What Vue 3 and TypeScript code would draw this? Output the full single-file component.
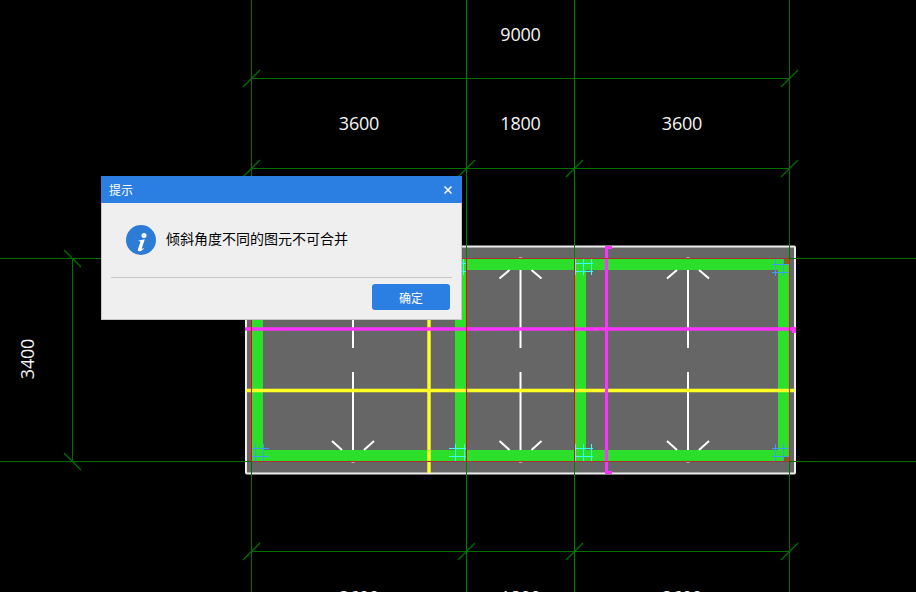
<script setup lang="ts">
interface Seg {
  x1: number
  y1: number
  x2: number
  y2: number
}

const axisX = [251.5, 466.5, 574.5, 789.5]
const beams = [
  { x: 252, y: 259, w: 537, h: 11 },
  { x: 252, y: 450, w: 537, h: 11 },
  { x: 252, y: 259, w: 11, h: 202 },
  { x: 455, y: 259, w: 11, h: 202 },
  { x: 575, y: 259, w: 11, h: 202 },
  { x: 778, y: 259, w: 11, h: 202 },
]

const dimLines: Seg[] = [
  { x1: 251, y1: 78.5, x2: 790, y2: 78.5 },
  { x1: 251, y1: 168.5, x2: 790, y2: 168.5 },
  { x1: 251, y1: 551.5, x2: 790, y2: 551.5 },
  { x1: 72.5, y1: 258, x2: 72.5, y2: 462 },
]

const ticks: Seg[] = []
for (const y of [78.5, 168.5, 551.5]) {
  for (const x of axisX) {
    if (y === 78.5 && (x === 466.5 || x === 574.5)) continue
    ticks.push({ x1: x - 8.5, y1: y + 8.5, x2: x + 8.5, y2: y - 8.5 })
  }
}
ticks.push({ x1: 64, y1: 250, x2: 81, y2: 267 }, { x1: 64, y1: 453, x2: 81, y2: 470 })

const barX = [353, 520.5, 688]
const bars: Seg[] = []
for (const x of barX) {
  bars.push(
    { x1: x, y1: 270, x2: x, y2: 348 },
    { x1: x, y1: 372, x2: x, y2: 450 },
    { x1: x - 21, y1: 441, x2: x - 11, y2: 450 },
    { x1: x + 21, y1: 441, x2: x + 11, y2: 450 },
    { x1: x - 21, y1: 278.5, x2: x - 11, y2: 270 },
    { x1: x + 21, y1: 278.5, x2: x + 11, y2: 270 },
  )
}

// small rebar hatch marks at the columns
const hatches = [
  { xs: [463.5], ys: [263.5, 271.5], x1: 449, x2: 466, y1: 258, y2: 275, color: '#38fff8' },
  { xs: [575.5, 583.5, 591.5], ys: [263.5, 271.5], x1: 575, x2: 593, y1: 258, y2: 275, color: '#38fff8' },
  { xs: [775.5, 783.5], ys: [264.5, 272.5], x1: 772, x2: 789, y1: 259, y2: 276, color: '#3aa0f5' },
  { xs: [255.5, 263.5], ys: [448.5, 456.5], x1: 252, x2: 269, y1: 444, y2: 461, color: '#3aa0f5' },
  { xs: [455.5, 464.5], ys: [448.5, 456.5], x1: 449, x2: 466, y1: 444, y2: 461, color: '#38fff8' },
  { xs: [575.5, 583.5, 591.5], ys: [448.5, 456.5], x1: 575, x2: 593, y1: 444, y2: 461, color: '#38fff8' },
  { xs: [775.5, 783.5], ys: [448.5, 456.5], x1: 772, x2: 789, y1: 444, y2: 461, color: '#3aa0f5' },
]

const labels = [
  { x: 520.5, y: 41, text: '9000' },
  { x: 359, y: 130, text: '3600' },
  { x: 520.5, y: 130, text: '1800' },
  { x: 682, y: 130, text: '3600' },
  { x: 359, y: 604, text: '3600' },
  { x: 520.5, y: 604, text: '1800' },
  { x: 682, y: 604, text: '3600' },
]
</script>

<template>
  <div class="page">
    <svg class="drawing" width="916" height="592" viewBox="0 0 916 592">
      <rect x="246" y="246.5" width="549" height="227" rx="1" fill="#666" stroke="#eee" stroke-width="2" />
      <rect v-for="(b, i) in beams" :key="'b' + i" :x="b.x" :y="b.y" :width="b.w" :height="b.h" fill="#2bdf2b" />
      <rect x="784" y="259" width="5" height="5" fill="#7a6a12" />
      <rect x="784" y="456" width="5" height="5" fill="#7a6a12" />

      <line
        v-for="(s, i) in bars"
        :key="'r' + i"
        :x1="s.x1"
        :y1="s.y1"
        :x2="s.x2"
        :y2="s.y2"
        stroke="#fff"
        stroke-width="2"
      />
      <g fill="#d9a0a0">
        <rect v-for="x in barX" :key="'m' + x" :x="x - 1.5" y="462" width="3" height="1" />
        <rect v-for="x in barX" :key="'n' + x" :x="x - 1.5" y="257" width="3" height="1" />
      </g>

      <g v-for="(h, i) in hatches" :key="'h' + i" :stroke="h.color" stroke-width="1">
        <line v-for="x in h.xs" :key="x" :x1="x" :y1="h.y1" :x2="x" :y2="h.y2" />
        <line v-for="y in h.ys" :key="y" :x1="h.x1" :y1="y" :x2="h.x2" :y2="y" />
      </g>

      <line x1="246" y1="390.5" x2="795" y2="390.5" stroke="#ffff26" stroke-width="3.4" />
      <line x1="429" y1="300" x2="429" y2="473" stroke="#ffff26" stroke-width="3.4" />
      <line x1="245" y1="329" x2="796" y2="329" stroke="#ff33ff" stroke-width="3.4" />
      <path d="M612 247.5H606.5V472.5H612" fill="none" stroke="#ff33ff" stroke-width="3" />
      <rect x="792" y="327" width="4" height="6" fill="#ff33ff" />

      <rect x="251.5" y="258.5" width="538" height="203" fill="none" stroke="#a83232" stroke-width="1" />
      <line x1="251.5" y1="259" x2="251.5" y2="461" stroke="#ff0000" />
      <line x1="466.5" y1="259" x2="466.5" y2="461" stroke="#ff0000" />
      <line x1="574.5" y1="259" x2="574.5" y2="461" stroke="#ff0000" />
      <line x1="789.5" y1="259" x2="789.5" y2="461" stroke="#c22a2a" />

      <g stroke="#006f00" stroke-width="1">
        <line x1="0" y1="258.5" x2="251" y2="258.5" />
        <line x1="0" y1="461.5" x2="251" y2="461.5" />
        <line x1="789" y1="461.5" x2="916" y2="461.5" />
        <line x1="789" y1="258.5" x2="916" y2="258.5" />
        <line x1="251.5" y1="0" x2="251.5" y2="258" />
        <line x1="251.5" y1="462" x2="251.5" y2="592" />
        <line x1="789.5" y1="0" x2="789.5" y2="258" />
        <line x1="789.5" y1="462" x2="789.5" y2="592" />
        <line v-for="(s, i) in dimLines" :key="'d' + i" :x1="s.x1" :y1="s.y1" :x2="s.x2" :y2="s.y2" />
        <line v-for="(s, i) in ticks" :key="'t' + i" :x1="s.x1" :y1="s.y1" :x2="s.x2" :y2="s.y2" stroke-width="1.3" />
      </g>
      <g stroke="#008000" stroke-width="1">
        <line x1="466.5" y1="0" x2="466.5" y2="258" />
        <line x1="466.5" y1="462" x2="466.5" y2="592" />
        <line x1="574.5" y1="0" x2="574.5" y2="258" />
        <line x1="574.5" y1="462" x2="574.5" y2="592" />
      </g>

      <text v-for="(l, i) in labels" :key="'l' + i" class="dim" :x="l.x" :y="l.y" text-anchor="middle">{{ l.text }}</text>
      <text class="dim" x="0" y="0" text-anchor="middle" transform="translate(34 359) rotate(-90)">3400</text>
    </svg>

    <div class="dialog">
      <div class="dialog-head">
        <span class="dialog-title">提示</span>
        <svg class="close" width="8" height="8" viewBox="0 0 8 8">
          <path d="M0.5 0.5L7.5 7.5M7.5 0.5L0.5 7.5" stroke="#fff" stroke-width="1.5" fill="none" />
        </svg>
      </div>
      <div class="dialog-body">
        <svg class="info" width="30" height="30" viewBox="0 0 30 30">
          <circle cx="15" cy="15" r="15" fill="#2c7cd6" />
          <circle cx="18" cy="10.6" r="2.5" fill="#fff" />
          <path
            d="M12.6 15.6L18.8 14.2L15.8 23.2C15.6 24 16.3 24.2 17.4 23L17.9 23.5C16.4 25.4 15 26.3 13.4 26.3C11.9 26.3 11.6 25.2 12 24L14.3 17.4C14.6 16.5 14 16.2 12.6 16.3Z"
            fill="#fff"
          />
        </svg>
        <span class="message">倾斜角度不同的图元不可合并</span>
      </div>
      <div class="dialog-foot">
        <button class="ok" type="button">确定</button>
      </div>
    </div>
  </div>
</template>

<style scoped>
.page {
  position: relative;
  width: 916px;
  height: 592px;
  overflow: hidden;
  background: #000;
}

.drawing {
  display: block;
}

.dim {
  fill: #f5f5f5;
  font-family: "Open Sans", "Noto Sans", sans-serif;
  font-size: 18px;
  letter-spacing: -0.2px;
}

.dialog {
  position: absolute;
  left: 101px;
  top: 176px;
  width: 361px;
  height: 144px;
  box-sizing: border-box;
  display: flex;
  flex-direction: column;
  background: #efefef;
  border: 1px solid #c8c8c8;
  border-top: 0;
  font-family: "Noto Sans CJK SC", "Noto Sans", sans-serif;
}

.dialog-head {
  height: 27px;
  margin: 0 -1px;
  padding: 0 10px 0 8px;
  display: flex;
  align-items: center;
  justify-content: space-between;
  background: #2c7fe2;
  color: #fff;
  font-size: 12px;
}

.dialog-body {
  height: 75px;
  margin: 0 9px;
  padding: 22px 0 0 15px;
  box-sizing: border-box;
  display: flex;
  align-items: flex-start;
  gap: 10px;
  border-bottom: 1px solid #c8c8c8;
}

.message {
  line-height: 26px;
  font-size: 14px;
  color: #000;
}

.dialog-foot {
  display: flex;
  justify-content: flex-end;
  padding: 6px 11px 0 0;
}

.ok {
  width: 78px;
  height: 26px;
  padding: 0;
  border: 0;
  border-radius: 3px;
  background: #2c7fe2;
  color: #fff;
  font-family: inherit;
  font-size: 12px;
}
</style>
